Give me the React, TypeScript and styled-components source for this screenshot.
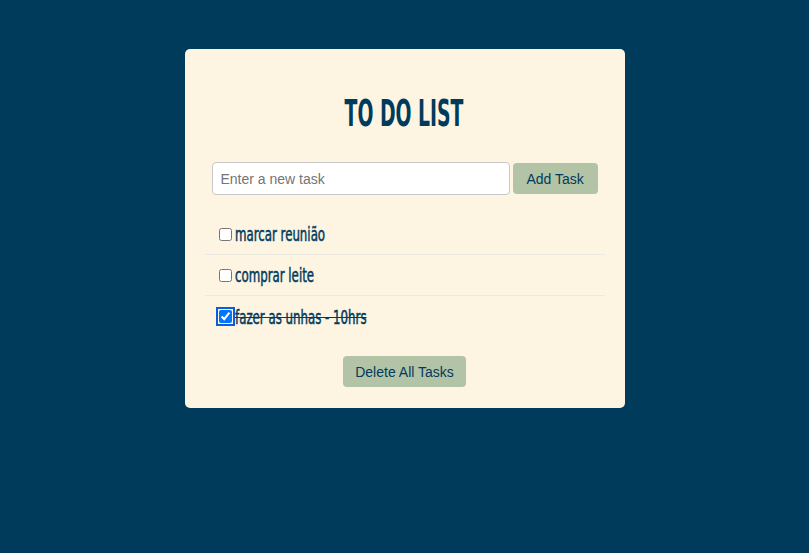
import React, { useState } from "react";
import styled, { createGlobalStyle } from "styled-components";

interface ITask {
  title: string;
  done: boolean;
}

const GlobalStyle = createGlobalStyle`
  html, body {
    margin: 0;
    padding: 0;
    background-color: #003b5c;
    font-family: "Liberation Sans", Arial, sans-serif;
  }
`;

const initialTasks: ITask[] = [
  { title: "marcar reunião", done: false },
  { title: "comprar leite", done: false },
  { title: "fazer as unhas - 10hrs", done: true },
];

const App: React.FC = () => {
  const [tasks, setTasks] = useState<ITask[]>(initialTasks);
  const [text, setText] = useState("");

  const addTask = () => {
    if (!text.trim()) return;
    setTasks([...tasks, { title: text, done: false }]);
    setText("");
  };

  const toggle = (index: number) => {
    setTasks(tasks.map((t, i) => (i === index ? { ...t, done: !t.done } : t)));
  };

  return (
    <Page>
      <GlobalStyle />
      <Card>
        <Title>
          <span>TO DO LIST</span>
        </Title>
        <Form
          onSubmit={(e) => {
            e.preventDefault();
            addTask();
          }}
        >
          <TaskInput
            placeholder="Enter a new task"
            value={text}
            onChange={(e) => setText(e.target.value)}
          />
          <Button type="submit" wide>
            Add Task
          </Button>
        </Form>
        <List>
          {tasks.map((task, i) => (
            <Item key={i} last={i === tasks.length - 1}>
              <Check
                type="checkbox"
                checked={task.done}
                focused={task.done}
                onChange={() => toggle(i)}
              />
              <TaskText done={task.done}>{task.title}</TaskText>
            </Item>
          ))}
        </List>
        <Actions>
          <Button onClick={() => setTasks([])}>Delete All Tasks</Button>
        </Actions>
      </Card>
    </Page>
  );
};

export default App;

const Page = styled.div`
  width: 809px;
  height: 553px;
  display: flex;
  justify-content: center;
  align-items: flex-start;
  padding-top: 49px;
  box-sizing: border-box;
`;

const Card = styled.div`
  width: 440px;
  box-sizing: border-box;
  background-color: #fdf4e2;
  border-radius: 5px;
  padding: 40px 20px 21px;
`;

const Title = styled.h1`
  margin: 0 0 25px;
  text-align: center;
  color: #003b5c;
  font-family: "DejaVu Sans Condensed", sans-serif;
  font-weight: 700;
  font-size: 38px;
  line-height: 48px;

  span {
    display: inline-block;
    transform: scaleX(0.55);
  }
`;

const Form = styled.form`
  display: flex;
  gap: 3px;
  padding: 0 7px;
  margin-bottom: 19px;
`;

const TaskInput = styled.input`
  width: 298px;
  flex-shrink: 0;
  height: 33px;
  box-sizing: border-box;
  border: 1px solid #c9c9c9;
  border-radius: 4px;
  padding: 0 8px;
  font-family: "Liberation Sans", Arial, sans-serif;
  font-size: 14px;
  color: #333;
  background: #fff;
  outline: none;

  &::placeholder {
    color: #757575;
  }
`;

const Button = styled.button<{ wide?: boolean }>`
  height: 31px;
  margin-top: 1px;
  padding: 0 ${(p) => (p.wide ? "14px" : "12px")};
  flex-shrink: 0;
  white-space: nowrap;
  border: none;
  border-radius: 4px;
  background-color: #b3c3a5;
  color: #003b5c;
  font-family: "Liberation Sans", Arial, sans-serif;
  font-size: 14px;
  cursor: pointer;
`;

const List = styled.ul`
  list-style: none;
  margin: 0;
  padding: 0;
`;

const Item = styled.li<{ last: boolean }>`
  display: flex;
  align-items: center;
  height: 41px;
  padding-left: 14px;
  border-bottom: ${(p) => (p.last ? "none" : "1px solid #ece9e0")};
  box-sizing: border-box;
`;

const Check = styled.input<{ focused: boolean }>`
  width: 13px;
  height: 13px;
  margin: 0 3px 0 0;
  outline: ${(p) => (p.focused ? "2px solid #0a5fd8" : "none")};
  outline-offset: 1px;
  border-radius: 2px;
`;

const TaskText = styled.span<{ done: boolean }>`
  display: inline-block;
  transform-origin: left center;
  transform: scaleX(0.69);
  color: #003b5c;
  font-family: "DejaVu Sans Condensed", sans-serif;
  font-weight: 400;
  font-size: 19px;
  -webkit-text-stroke: 0.5px #003b5c;
  text-decoration: ${(p) => (p.done ? "line-through" : "none")};
`;

const Actions = styled.div`
  display: flex;
  justify-content: center;
  margin-top: 18px;
`;
